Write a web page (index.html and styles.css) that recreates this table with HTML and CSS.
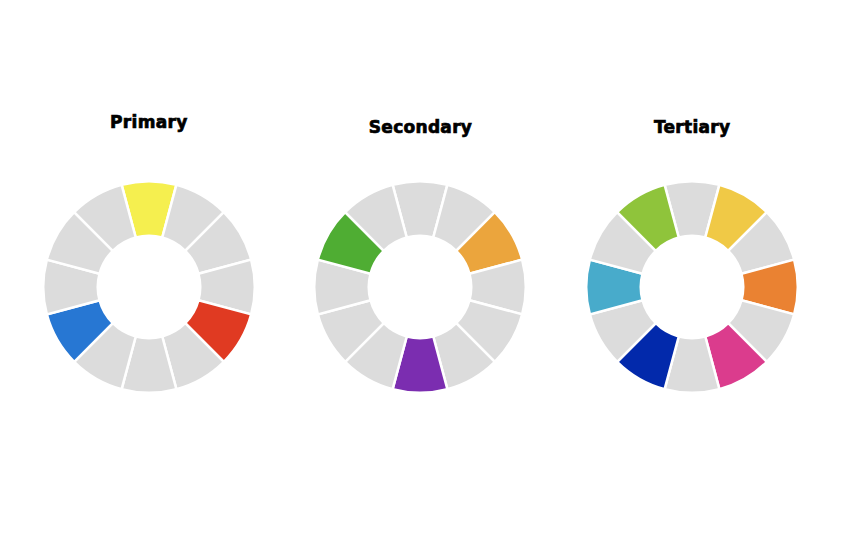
FILE: index.html
```html
<!DOCTYPE html>
<html lang="en">
<head>
<meta charset="utf-8">
<title>Color wheels</title>
<link rel="stylesheet" href="styles.css">
</head>
<body>
<svg class="defs" width="0" height="0" aria-hidden="true">
  <defs>
    <path id="seg" d="M -27.370 -102.147 A 105.75 105.75 0 0 1 27.370 -102.147 L 13.264 -49.504 A 51.25 51.25 0 0 0 -13.264 -49.504 Z"/>
  </defs>
</svg>
<main class="wheels">
  <section class="wheel-col">
    <h2 class="title title--raised">Primary</h2>
    <svg class="wheel" viewBox="-107 -107 214 214" width="214" height="214">
      <use href="#seg" class="seg c-yellow" transform="rotate(0)"/>
      <use href="#seg" class="seg" transform="rotate(30)"/>
      <use href="#seg" class="seg" transform="rotate(60)"/>
      <use href="#seg" class="seg" transform="rotate(90)"/>
      <use href="#seg" class="seg c-red" transform="rotate(120)"/>
      <use href="#seg" class="seg" transform="rotate(150)"/>
      <use href="#seg" class="seg" transform="rotate(180)"/>
      <use href="#seg" class="seg" transform="rotate(210)"/>
      <use href="#seg" class="seg c-blue" transform="rotate(240)"/>
      <use href="#seg" class="seg" transform="rotate(270)"/>
      <use href="#seg" class="seg" transform="rotate(300)"/>
      <use href="#seg" class="seg" transform="rotate(330)"/>
    </svg>
  </section>
  <section class="wheel-col">
    <h2 class="title">Secondary</h2>
    <svg class="wheel" viewBox="-107 -107 214 214" width="214" height="214">
      <use href="#seg" class="seg" transform="rotate(0)"/>
      <use href="#seg" class="seg" transform="rotate(30)"/>
      <use href="#seg" class="seg c-orange" transform="rotate(60)"/>
      <use href="#seg" class="seg" transform="rotate(90)"/>
      <use href="#seg" class="seg" transform="rotate(120)"/>
      <use href="#seg" class="seg" transform="rotate(150)"/>
      <use href="#seg" class="seg c-purple" transform="rotate(180)"/>
      <use href="#seg" class="seg" transform="rotate(210)"/>
      <use href="#seg" class="seg" transform="rotate(240)"/>
      <use href="#seg" class="seg" transform="rotate(270)"/>
      <use href="#seg" class="seg c-green" transform="rotate(300)"/>
      <use href="#seg" class="seg" transform="rotate(330)"/>
    </svg>
  </section>
  <section class="wheel-col">
    <h2 class="title">Tertiary</h2>
    <svg class="wheel" viewBox="-107 -107 214 214" width="214" height="214">
      <use href="#seg" class="seg" transform="rotate(0)"/>
      <use href="#seg" class="seg c-amber" transform="rotate(30)"/>
      <use href="#seg" class="seg" transform="rotate(60)"/>
      <use href="#seg" class="seg c-tangerine" transform="rotate(90)"/>
      <use href="#seg" class="seg" transform="rotate(120)"/>
      <use href="#seg" class="seg c-magenta" transform="rotate(150)"/>
      <use href="#seg" class="seg" transform="rotate(180)"/>
      <use href="#seg" class="seg c-navy" transform="rotate(210)"/>
      <use href="#seg" class="seg" transform="rotate(240)"/>
      <use href="#seg" class="seg c-teal" transform="rotate(270)"/>
      <use href="#seg" class="seg" transform="rotate(300)"/>
      <use href="#seg" class="seg c-lime" transform="rotate(330)"/>
    </svg>
  </section>
</main>
</body>
</html>
```

FILE: styles.css
```css
html, body {
  margin: 0;
  padding: 0;
  background: #ffffff;
}

body {
  font-family: "DejaVu Sans", "Liberation Sans", sans-serif;
  color: #000000;
}

.defs {
  position: absolute;
  width: 0;
  height: 0;
  overflow: hidden;
}

.wheels {
  display: grid;
  grid-template-columns: repeat(3, 1fr);
  width: 815px;
  margin-left: 13px;
  padding-top: 117px;
}

.wheel-col {
  display: flex;
  flex-direction: column;
  align-items: center;
}

.title {
  margin: 0 0 43px 0;
  font-size: 17px;
  line-height: 20px;
  font-weight: 700;
  -webkit-text-stroke: 0.7px #000;
  letter-spacing: 0.3px;
}

.title--raised {
  margin-top: -5px;
  margin-bottom: 48px;
}

.wheel {
  display: block;
}

.seg {
  fill: #dcdcdc;
  stroke: #ffffff;
  stroke-width: 2.5;
  stroke-linejoin: miter;
}

.c-yellow { fill: #f5ef4f; }
.c-red { fill: #e03a22; }
.c-blue { fill: #2777d3; }

.c-orange { fill: #eba53d; }
.c-purple { fill: #7b2db0; }
.c-green { fill: #4fad33; }

.c-amber { fill: #f0c946; }
.c-tangerine { fill: #ea8232; }
.c-magenta { fill: #db3c8d; }
.c-navy { fill: #0229ab; }
.c-teal { fill: #48abcb; }
.c-lime { fill: #8fc43b; }
```
